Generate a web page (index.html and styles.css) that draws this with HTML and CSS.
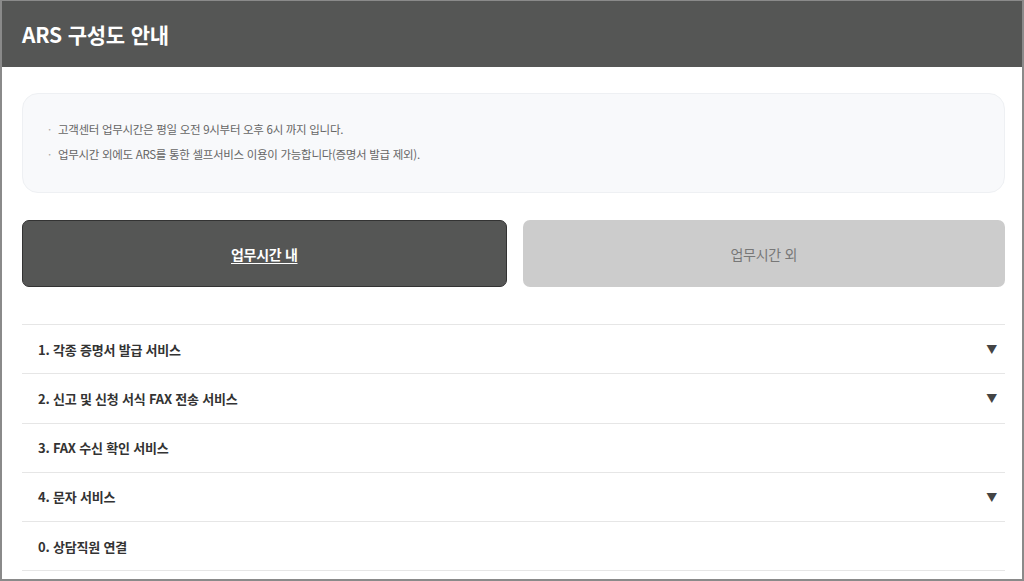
FILE: index.html
```html
<!DOCTYPE html>
<html lang="ko">
<head>
<meta charset="utf-8">
<link rel="stylesheet" href="styles.css">
</head>
<body>
<div class="frame">
  <header class="top">
    <h1 class="title">ARS 구성도 안내</h1>
  </header>
  <main class="content">
    <div class="notice">
      <p class="notice-line">고객센터 업무시간은 평일 오전 9시부터 오후 6시 까지 입니다.</p>
      <p class="notice-line">업무시간 외에도 ARS를 통한 셀프서비스 이용이 가능합니다(증명서 발급 제외).</p>
    </div>
    <div class="tabs">
      <a class="tab tab-on">업무시간 내</a>
      <a class="tab tab-off">업무시간 외</a>
    </div>
    <ul class="menu">
      <li class="item"><span>1. 각종 증명서 발급 서비스</span><span class="arrow">▼</span></li>
      <li class="item"><span>2. 신고 및 신청 서식 FAX 전송 서비스</span><span class="arrow">▼</span></li>
      <li class="item"><span>3. FAX 수신 확인 서비스</span></li>
      <li class="item"><span>4. 문자 서비스</span><span class="arrow">▼</span></li>
      <li class="item"><span>0. 상담직원 연결</span></li>
    </ul>
  </main>
</div>
</body>
</html>
```
FILE: styles.css
```css
* { box-sizing: border-box; }
html, body { margin: 0; padding: 0; background: #fff; }
body { font-family: "Noto Sans CJK KR", "Noto Sans", sans-serif; }
.frame {
  width: 1024px;
  height: 581px;
  border: 2px solid #8a8a8a;
  border-top-width: 1px;
  overflow: hidden;
  background: #fff;
}
.top {
  height: 66px;
  background: #555655;
  padding: 0 16px 0 20px;
  display: flex;
  align-items: center;
}
.title {
  margin: 0;
  color: #fff;
  font-size: 21px;
  font-weight: 700;
  letter-spacing: -0.2px;
}
.content { padding: 26px 17px 0 20px; }
.notice {
  height: 100px;
  background: #f8f9fb;
  border: 1px solid #eef0f3;
  border-radius: 16px;
  padding: 23px 25px;
}
.notice-line {
  margin: 0;
  font-size: 11.5px;
  line-height: 25px;
  color: #666;
  letter-spacing: -0.3px;
}
.notice-line::before {
  content: "·";
  color: #aaa;
  margin-right: 7px;
}
.tabs {
  margin-top: 27px;
  display: flex;
  gap: 16px;
}
.tab {
  flex: 1 1 0;
  height: 67px;
  border-radius: 7px;
  display: flex;
  align-items: center;
  justify-content: center;
  font-size: 14px;
  letter-spacing: -0.3px;
}
.tab-on {
  background: #555655;
  border: 1px solid #333;
  color: #fff;
  font-weight: 700;
  text-decoration: underline;
  text-underline-offset: 3px;
}
.tab-off {
  background: #cccccc;
  color: #777;
}
.menu {
  list-style: none;
  margin: 37px 0 0;
  padding: 0;
  border-bottom: 1px solid #e6e6e6;
}
.item {
  height: 49.25px;
  border-top: 1px solid #e6e6e6;
  display: flex;
  align-items: center;
  justify-content: space-between;
  padding: 0 8px 0 16px;
  font-size: 13px;
  font-weight: 700;
  color: #333;
  letter-spacing: -0.2px;
}
.arrow {
  font-size: 11px;
  color: #444;
}
```
